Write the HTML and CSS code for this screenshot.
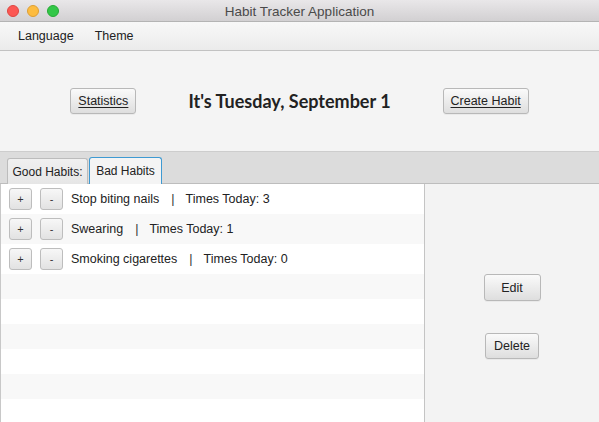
FILE: index.html
```html
<!DOCTYPE html>
<html>
<head>
<meta charset="utf-8">
<link rel="stylesheet" href="styles.css">
</head>
<body>
<div class="window">
  <div class="titlebar">
    <div class="lights">
      <span class="light red"></span>
      <span class="light yellow"></span>
      <span class="light green"></span>
    </div>
    <div class="title">Habit Tracker Application</div>
  </div>
  <div class="menubar">
    <span class="menu">Language</span>
    <span class="menu">Theme</span>
  </div>
  <div class="header">
    <button class="btn btn-stats"><u>Statistics</u></button>
    <h1 class="day">It's Tuesday, September 1</h1>
    <button class="btn btn-create"><u>Create Habit</u></button>
  </div>
  <div class="tabbar">
    <div class="tab tab-good">Good Habits:</div>
    <div class="tab tab-bad active">Bad Habits</div>
  </div>
  <div class="content">
    <div class="list">
      <div class="row filled">
        <button class="sbtn">+</button><button class="sbtn">-</button>
        <span class="name">Stop biting nails</span><span class="sep">|</span><span class="count">Times Today: 3</span>
      </div>
      <div class="row filled odd">
        <button class="sbtn">+</button><button class="sbtn">-</button>
        <span class="name">Swearing</span><span class="sep">|</span><span class="count">Times Today: 1</span>
      </div>
      <div class="row filled">
        <button class="sbtn">+</button><button class="sbtn">-</button>
        <span class="name">Smoking cigarettes</span><span class="sep">|</span><span class="count">Times Today: 0</span>
      </div>
      <div class="row empty odd"></div>
      <div class="row empty"></div>
      <div class="row empty odd"></div>
      <div class="row empty"></div>
      <div class="row empty odd"></div>
      <div class="row empty"></div>
    </div>
    <div class="side">
      <button class="btn btn-edit">Edit</button>
      <button class="btn btn-delete">Delete</button>
    </div>
  </div>
</div>
</body>
</html>
```
FILE: styles.css
```css
* { box-sizing: border-box; }
html, body { margin: 0; padding: 0; }
body {
  width: 599px;
  height: 422px;
  overflow: hidden;
  font-family: "Liberation Sans", Arial, sans-serif;
  font-size: 12.5px;
  color: #222;
  background: #f4f4f4;
}
.window {
  width: 599px;
  height: 422px;
  display: flex;
  flex-direction: column;
  overflow: hidden;
}
.titlebar {
  height: 22px;
  flex: none;
  position: relative;
  background: linear-gradient(#e9e7e9, #d2d0d2);
  border-bottom: 1px solid #b4b4b4;
  display: flex;
  align-items: center;
  justify-content: center;
}
.lights {
  position: absolute;
  left: 7px;
  top: 5px;
  display: flex;
  gap: 8px;
}
.light {
  width: 12px;
  height: 12px;
  border-radius: 50%;
  display: block;
}
.red { background: #fc5753; border: 1px solid #de4641; }
.yellow { background: #fdbc40; border: 1px solid #de9f34; }
.green { background: #33c748; border: 1px solid #27aa35; }
.title {
  font-size: 13.5px;
  color: #4a4a4a;
  padding-top: 1px;
}
.menubar {
  height: 29px;
  flex: none;
  background: linear-gradient(#f8f8f8, #ebebeb);
  border-bottom: 1px solid #c2c2c2;
  display: flex;
  align-items: center;
  padding-left: 18px;
  gap: 21px;
}
.menu { font-size: 12.5px; color: #222; }
.header {
  height: 100px;
  flex: none;
  background: #f4f4f4;
  display: flex;
  align-items: center;
  justify-content: center;
  gap: 52px;
}
.day {
  margin: 0;
  font-family: Lato, "Liberation Sans", sans-serif;
  font-weight: bold;
  font-size: 18px;
  color: #222;
  white-space: nowrap;
}
.btn {
  font-family: "Liberation Sans", Arial, sans-serif;
  font-size: 12.5px;
  color: #222;
  height: 26px;
  padding: 0;
  white-space: nowrap;
  border: 1px solid #b8b8b8;
  border-radius: 3px;
  background: linear-gradient(#fafafa, #dedede);
  box-shadow: 0 1px 0 rgba(0,0,0,0.04);
}
.btn u { text-decoration-thickness: 1px; text-underline-offset: 2px; }
.btn-stats { width: 66px; }
.btn-create { width: 86px; }
.tabbar {
  height: 33px;
  flex: none;
  background: #dcdcdc;
  border-top: 1px solid #cdcdcd;
  border-bottom: 1px solid #bdbdbd;
  display: flex;
  align-items: flex-end;
  padding-left: 7px;
  gap: 1px;
}
.tab {
  height: 26px;
  display: flex;
  align-items: center;
  justify-content: center;
  white-space: nowrap;
  font-size: 12px;
  color: #222;
  background: linear-gradient(#f0f0f0, #e6e6e6);
  border: 1px solid #bcbcbc;
  border-bottom: none;
  border-radius: 3px 3px 0 0;
  margin-bottom: -1px;
}
.tab-good { width: 81px; }
.tab-bad { width: 73px; }
.tab.active {
  height: 27px;
  background: #f4f4f4;
  border: 1px solid #3f9ad2;
  border-bottom: none;
}
.content {
  flex: 1;
  display: flex;
  min-height: 0;
}
.list {
  width: 425px;
  flex: none;
  background: #fff;
  border-left: 1px solid #c8c8c8;
  border-right: 1px solid #c4c4c4;
  display: flex;
  flex-direction: column;
}
.row {
  display: flex;
  align-items: center;
  background: #fff;
  flex: none;
  white-space: nowrap;
}
.row.odd { background: #f8f8f8; }
.row.filled { height: 30px; padding-left: 8px; }
.row.empty { height: 25px; }
.sbtn {
  width: 23px;
  height: 22px;
  padding: 0;
  margin-right: 8px;
  font-family: "Liberation Sans", Arial, sans-serif;
  font-size: 11px;
  color: #333;
  border: 1px solid #bdbdbd;
  border-radius: 3px;
  background: linear-gradient(#f7f7f7, #e2e2e2);
}
.sep { margin: 0 11px 0 12px; color: #333; }
.side {
  flex: 1;
  background: #f3f3f3;
  display: flex;
  flex-direction: column;
  align-items: center;
  padding-top: 90px;
  gap: 32px;
}
.btn-edit { width: 57px; height: 27px; }
.btn-delete { width: 54px; height: 26px; }
```
